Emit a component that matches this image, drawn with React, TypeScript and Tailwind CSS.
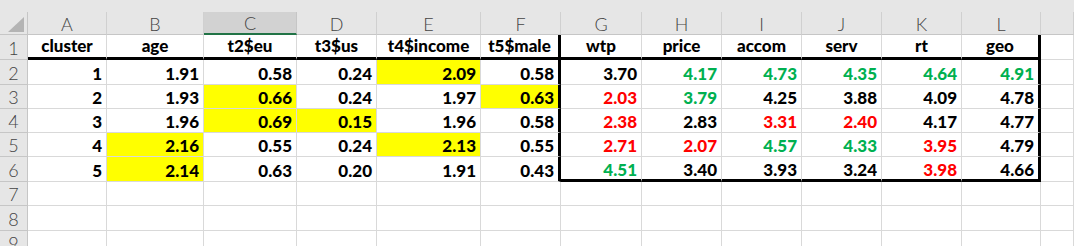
import React from "react";

type C = { v: string; c?: "g" | "r"; y?: boolean };

const heads = ["cluster", "age", "t2$eu", "t3$us", "t4$income", "t5$male", "wtp", "price", "accom", "serv", "rt", "geo"];
const letters = ["A", "B", "C", "D", "E", "F", "G", "H", "I", "J", "K", "L", ""];

const rows: C[][] = [
  [{ v: "1" }, { v: "1.91" }, { v: "0.58" }, { v: "0.24" }, { v: "2.09", y: true }, { v: "0.58" }, { v: "3.70" }, { v: "4.17", c: "g" }, { v: "4.73", c: "g" }, { v: "4.35", c: "g" }, { v: "4.64", c: "g" }, { v: "4.91", c: "g" }],
  [{ v: "2" }, { v: "1.93" }, { v: "0.66", y: true }, { v: "0.24" }, { v: "1.97" }, { v: "0.63", y: true }, { v: "2.03", c: "r" }, { v: "3.79", c: "g" }, { v: "4.25" }, { v: "3.88" }, { v: "4.09" }, { v: "4.78" }],
  [{ v: "3" }, { v: "1.96" }, { v: "0.69", y: true }, { v: "0.15", y: true }, { v: "1.96" }, { v: "0.58" }, { v: "2.38", c: "r" }, { v: "2.83" }, { v: "3.31", c: "r" }, { v: "2.40", c: "r" }, { v: "4.17" }, { v: "4.77" }],
  [{ v: "4" }, { v: "2.16", y: true }, { v: "0.55" }, { v: "0.24" }, { v: "2.13", y: true }, { v: "0.55" }, { v: "2.71", c: "r" }, { v: "2.07", c: "r" }, { v: "4.57", c: "g" }, { v: "4.33", c: "g" }, { v: "3.95", c: "r" }, { v: "4.79" }],
  [{ v: "5" }, { v: "2.14", y: true }, { v: "0.63" }, { v: "0.20" }, { v: "1.91" }, { v: "0.43" }, { v: "4.51", c: "g" }, { v: "3.40" }, { v: "3.93" }, { v: "3.24" }, { v: "3.98", c: "r" }, { v: "4.66" }],
];

const gridCols = "grid grid-cols-[28px_79px_97px_93px_80px_104px_80px_81px_80px_80px_80px_80px_79px_1fr]";
const font = "font-['Lato','Liberation_Sans',sans-serif]";

function RowHead({ n }: { n: number }) {
  return (
    <div className="bg-[#e6e6e6] border-r border-b border-[#c6c6c6] text-[#444] text-[18px] font-light flex items-center justify-center leading-none pt-[1px]">
      {n}
    </div>
  );
}

function cellBorder(ri: number, ci: number) {
  const thickR = ri <= 5 && (ci === 5 || ci === 11);
  const thickB = (ri === 0 && ci <= 11) || (ri === 5 && ci >= 6 && ci <= 11);
  let cls = "";
  cls += thickR ? " border-r-[3px] border-r-black" : " border-r border-r-[#d9d9d9]";
  cls += thickB ? " border-b-[3px] border-b-black" : " border-b border-b-[#d9d9d9]";
  return cls;
}

export default function App() {
  const rowH = ["h-[25px]", "h-[25px]", "h-[24px]", "h-[24px]", "h-[24px]", "h-[25px]", "h-[24px]", "h-[25px]", "h-[24px]"];
  return (
    <div className={`w-[1074px] h-[246px] overflow-hidden bg-white ${font}`}>
      <div className="h-[12px] bg-[#e6e6e6]" />
      <div className={`${gridCols} h-[23px]`}>
        <div className="relative bg-[#e6e6e6] border-r border-b border-[#c6c6c6]">
          <div className="absolute left-[8px] top-[5px] w-0 h-0 border-l-[16px] border-l-transparent border-b-[15px] border-b-[#b4b4b4]" />
        </div>
        {letters.map((l, i) => (
          <div
            key={i}
            className={
              i === 2
                ? "bg-[#d2d2d2] border-r border-r-[#c6c6c6] border-b-2 border-b-[#217346] text-[#444] text-[18px] font-light leading-none flex items-center justify-center pt-[1px]"
                : "bg-[#e6e6e6] border-r border-r-[#d0d0d0] border-b border-b-[#c6c6c6] text-[#444] text-[18px] font-light leading-none flex items-center justify-center pt-[1px]"
            }
          >
            {l}
          </div>
        ))}
      </div>
      <div className={`${gridCols} ${rowH[0]}`}>
        <RowHead n={1} />
        {heads.map((h, ci) => (
          <div key={ci} className={`font-black text-[17px] text-black leading-none flex items-center justify-center pb-[1px] ${cellBorder(0, ci)}`}>
            {h}
          </div>
        ))}
        <div className={cellBorder(0, 12)} />
      </div>
      {rows.map((r, ri) => (
        <div key={ri} className={`${gridCols} ${rowH[ri + 1]}`}>
          <RowHead n={ri + 2} />
          {r.map((c, ci) => (
            <div
              key={ci}
              className={`font-black text-[17px] leading-none flex items-center justify-end pr-[4px] pt-[2px] ${c.y ? "bg-[#ffff00]" : ""} ${
                c.c === "g" ? "text-[#00b050]" : c.c === "r" ? "text-[#ff0000]" : "text-black"
              } ${cellBorder(ri + 1, ci)}`}
            >
              {c.v}
            </div>
          ))}
          <div className={cellBorder(ri + 1, 12)} />
        </div>
      ))}
      {[7, 8, 9].map((n, k) => (
        <div key={n} className={`${gridCols} ${rowH[6 + k]}`}>
          <RowHead n={n} />
          {letters.map((_, ci) => (
            <div key={ci} className="border-r border-b border-[#d9d9d9]" />
          ))}
        </div>
      ))}
    </div>
  );
}
